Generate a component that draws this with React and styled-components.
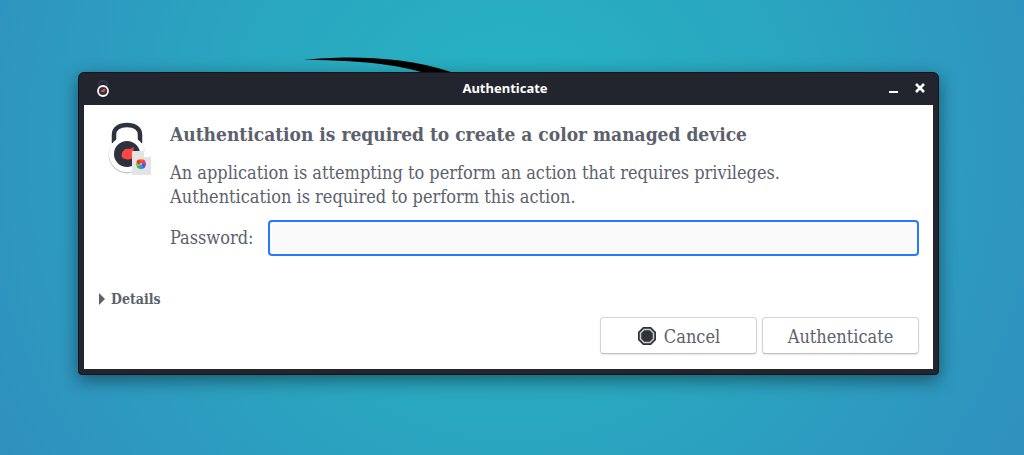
import React, { useState } from "react";
import styled, { createGlobalStyle } from "styled-components";

const Global = createGlobalStyle`
  * { box-sizing: border-box; }
  body { margin: 0; }
`;

const slab = `"Roboto Slab", "DejaVu Serif Condensed", "DejaVu Serif", serif`;

const Desktop = styled.div`
  position: relative;
  min-height: 100vh;
  padding: 72px 85px 80px 78px;
  background: radial-gradient(circle farthest-corner at 50% 33%, #26b5c3 0%, #2aa5c0 50%, #2e98c0 80%, #2f90be 100%);
  color: #5c616c;
  font-family: ${slab};
  font-size: 18px;
  line-height: 24px;
`;

const Swoosh = styled.svg`
  position: absolute;
  left: 300px;
  top: 55px;
`;

const Dialog = styled.section`
  position: relative;
  border: 1px solid #13141a;
  border-radius: 6px 6px 4px 4px;
  background: #22252e;
  padding: 0 5px 5px;
  box-shadow: 0 5px 18px rgba(0, 0, 0, 0.45);
`;

const TitleBar = styled.header`
  display: grid;
  grid-template-columns: 52px 1fr 64px;
  align-items: center;
  height: 32px;
  padding: 0 7px 0 12px;
  color: #fff;
`;

const Title = styled.h1`
  margin: 0;
  padding-bottom: 2px;
  text-align: center;
  font: 700 13px/20px "Noto Sans", sans-serif;
`;

const WindowControls = styled.div`
  display: flex;
  justify-content: flex-end;
  gap: 12px;
`;

const WindowButton = styled.button`
  display: flex;
  padding: 0;
  border: 0;
  background: none;
  color: #fff;
`;

const Content = styled.form`
  background: #fff;
  padding: 16px 14px 15px;
`;

const Message = styled.div`
  display: grid;
  grid-template-columns: 60px 1fr;
  column-gap: 12px;
`;

const Heading = styled.h2`
  margin: 0;
  font-size: 19px;
  line-height: 26px;
`;

const Text = styled.p`
  margin: 14px 0 11px;
`;

const Field = styled.div`
  display: flex;
  align-items: center;
  gap: 12px;
`;

const Label = styled.label`
  flex: 0 0 86px;
`;

const Password = styled.input`
  flex: 1;
  min-width: 0;
  height: 36px;
  padding: 0 8px;
  border: 2px solid #2777ff;
  border-radius: 4px;
  background: #fafafa;
  font: inherit;
  outline: none;
`;

const DetailsButton = styled.button`
  display: flex;
  align-items: center;
  gap: 5px;
  margin: 31px 0 6px;
  padding: 0;
  border: 0;
  background: none;
  color: inherit;
  font: 700 14px/24px ${slab};
`;

const Actions = styled.div`
  display: flex;
  justify-content: flex-end;
  gap: 5px;
`;

const Button = styled.button`
  display: flex;
  align-items: center;
  justify-content: center;
  gap: 7px;
  width: 157px;
  height: 37px;
  padding: 2px 6px 0;
  border: 1px solid #d3d4d6;
  border-bottom-color: #bfc0c2;
  border-radius: 4px;
  background: #fff;
  box-shadow: 0 1px 2px rgba(0, 0, 0, 0.1);
  color: inherit;
  font: inherit;
`;

const PETALS = ["#f9a11b", "#f25022", "#c13bd0", "#5b4be0", "#2196f3", "#28b463", "#8bc34a", "#e53935"];

const LockDrawing = styled.svg`
  justify-self: end;
  margin-right: 6px;
`;

function LockIcon() {
  return (
    <LockDrawing width="44" height="56" viewBox="0 0 44 56" aria-hidden="true">
      <path d="M6 22V14C6 7 12 4 19 4S32 7 32 14V22" fill="none" stroke="#2e323e" strokeWidth="4.500" />
      <circle cx="19" cy="34" r="18.500" fill="#c9c9c9" />
      <circle cx="19" cy="33" r="18" fill="#fff" />
      <circle cx="19" cy="33" r="13" fill="#2e323e" />
      <path d="M14 32C15 28 19 27 22 28L26 26L25 31C28 36 22 40 18 38C14 38 13 35 14 32Z" fill="#ff4545" />
      <path d="M24 30H36L43 36V54H24Z" fill="#e4e4e4" />
      <path d="M36 30V36H43Z" fill="#fff" />
      {PETALS.map((color, i) => (
        <circle key={color} cx="33" cy="40" r="2.200" fill={color} transform={`rotate(${i * 45} 33 43)`} />
      ))}
    </LockDrawing>
  );
}

export default function App() {
  const [open, setOpen] = useState(false);
  return (
    <Desktop>
      <Global />
      <Swoosh width="160" height="24" viewBox="0 0 160 24" aria-hidden="true">
        <path d="M4 5C40 1 100 0 151 17V24H140C115 12 70 5 4 5Z" />
      </Swoosh>
      <Dialog role="dialog" aria-labelledby="dialog-title">
        <TitleBar>
          <svg width="14" height="20" viewBox="0 0 14 20" aria-hidden="true">
            <path d="M3 7V5Q3 2 7 2T11 5V7" fill="none" stroke="#343743" strokeWidth="2" />
            <circle cx="7" cy="12" r="5" fill="#2e323e" stroke="#fff" strokeWidth="1.800" />
            <path d="M5 12L9 10L8 13Z" fill="#ff4545" stroke="#ff4545" />
          </svg>
          <Title id="dialog-title">Authenticate</Title>
          <WindowControls>
            <WindowButton type="button" aria-label="Minimize">
              <svg width="20" height="12" viewBox="0 0 20 12"><path d="M7 9H16" stroke="currentColor" strokeWidth="2" /></svg>
            </WindowButton>
            <WindowButton type="button" aria-label="Close">
              <svg width="12" height="12" viewBox="0 0 12 12"><path d="M2 1L10 9M10 1L2 9" stroke="currentColor" strokeWidth="2.500" /></svg>
            </WindowButton>
          </WindowControls>
        </TitleBar>
        <Content onSubmit={(e) => e.preventDefault()}>
          <Message>
            <LockIcon />
            <div>
              <Heading>Authentication is required to create a color managed device</Heading>
              <Text>
                An application is attempting to perform an action that requires privileges.
                <br />
                Authentication is required to perform this action.
              </Text>
              <Field>
                <Label htmlFor="password">Password:</Label>
                <Password id="password" type="password" />
              </Field>
            </div>
          </Message>
          <DetailsButton type="button" aria-expanded={open} onClick={() => setOpen(!open)}>
            <svg width="8" height="12" viewBox="0 0 8 12" aria-hidden="true"><path d="M1 0L7 6L1 12Z" fill="currentColor" /></svg>
            Details
          </DetailsButton>
          <Actions>
            <Button type="button">
              <svg width="20" height="20" viewBox="0 0 20 20" aria-hidden="true">
                <path d="M6 0H14L19 5V13L14 18H6L1 13V5Z" fill="#30343a" />
                <path d="M7 2.500H13L16.500 6V12L13 15.500H7L3.500 12V6Z" fill="#30343a" stroke="#c8cacb" strokeWidth="1.500" />
              </svg>
              Cancel
            </Button>
            <Button type="submit">Authenticate</Button>
          </Actions>
        </Content>
      </Dialog>
    </Desktop>
  );
}
